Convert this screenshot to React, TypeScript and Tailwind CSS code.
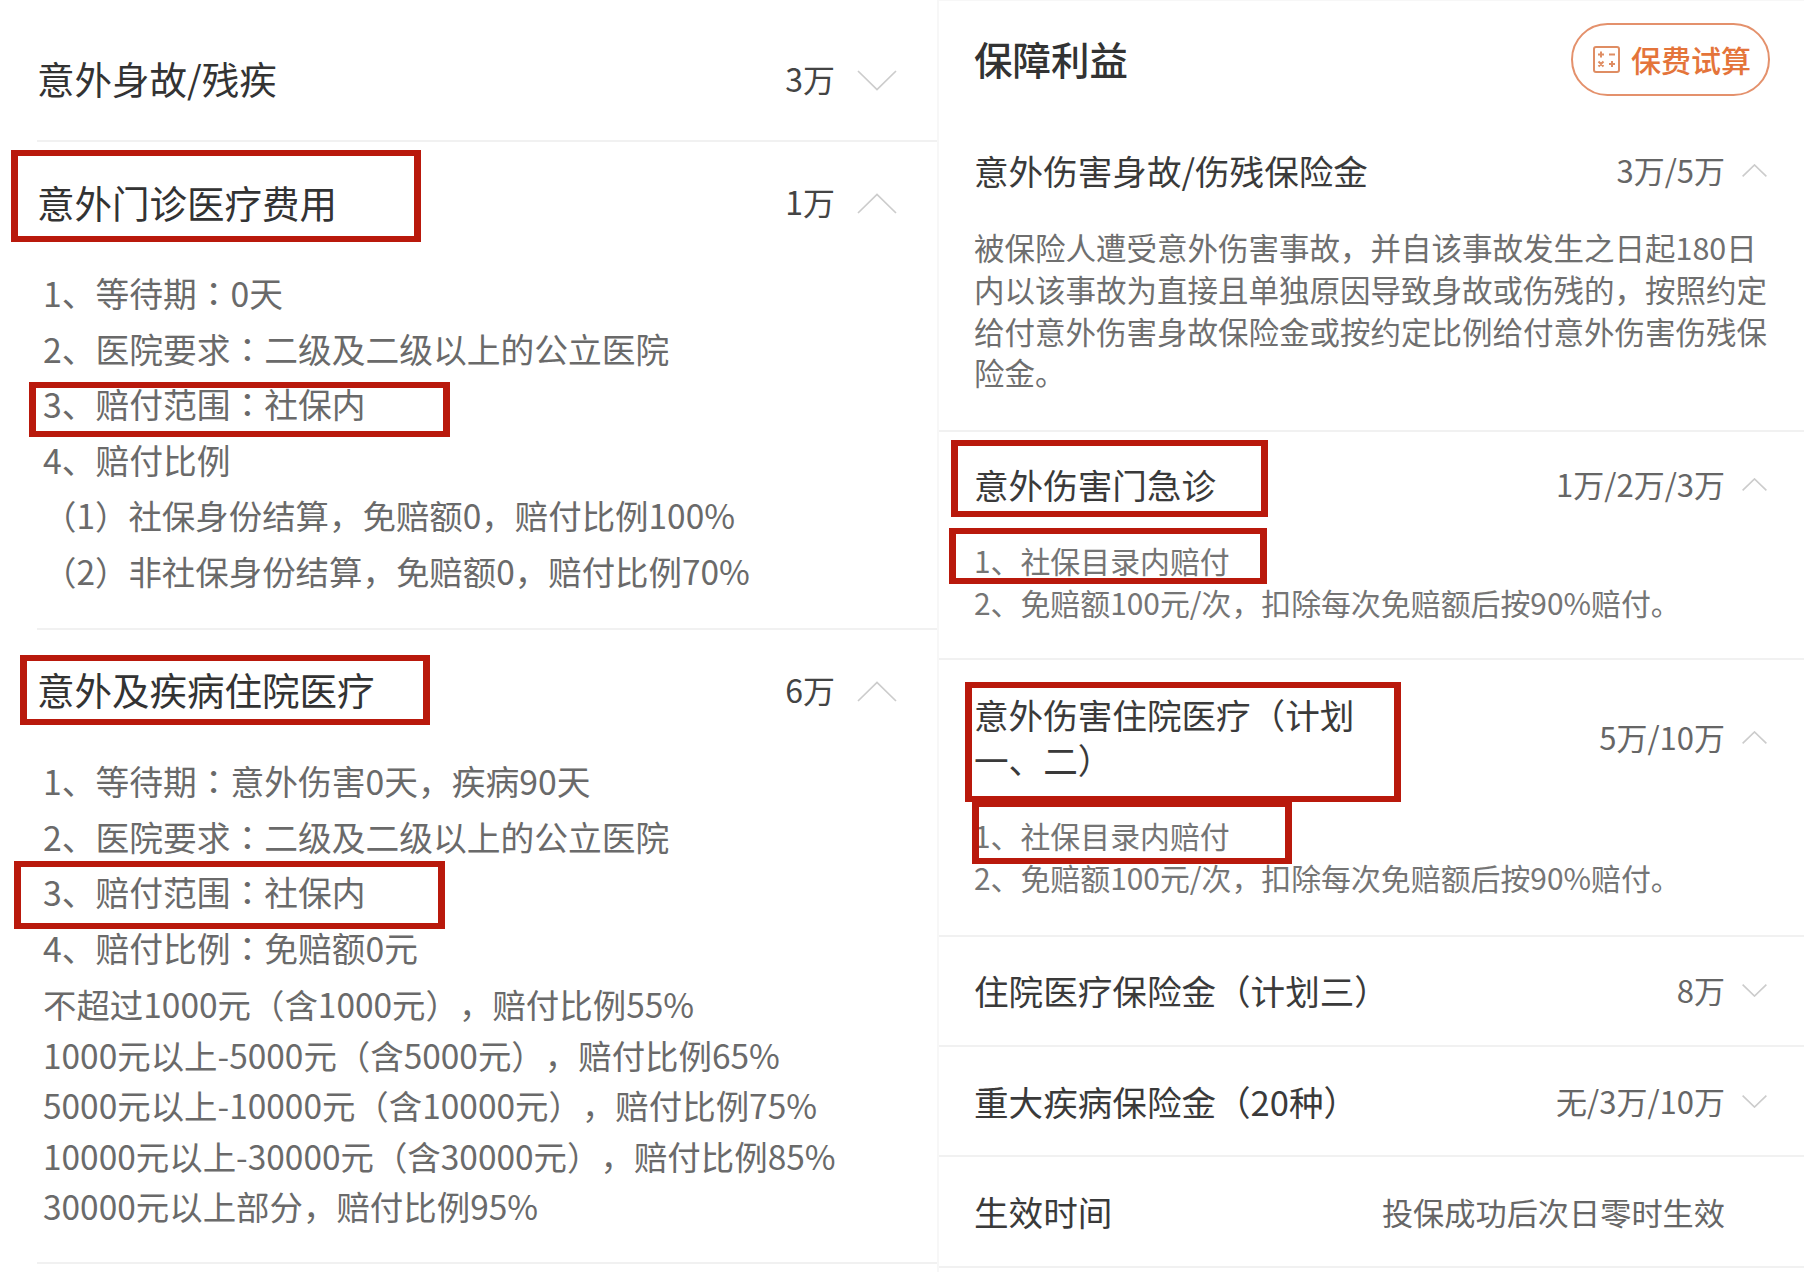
const ui = '"Noto Sans CJK SC", "Noto Sans", sans-serif';

function Chevron({ up, large }: { up?: boolean; large?: boolean }) {
  return (
    <svg
      viewBox="0 0 40 21"
      preserveAspectRatio="none"
      fill="none"
      stroke="#cccccc"
      strokeWidth={large ? 1.7 : 2.6}
      className={large ? "h-[21px] w-[40px] shrink-0" : "h-[13px] w-[25px] shrink-0"}
    >
      <path d={up ? "M1 20 L20 1.5 L39 20" : "M1 1 L20 19.5 L39 1"} />
    </svg>
  );
}

function Colon() {
  return <span style={{ fontFamily: '"Noto Sans CJK JP", sans-serif' }}>：</span>;
}

function LeftHeader({ title, value, up, cls }: { title: string; value: string; up?: boolean; cls: string }) {
  return (
    <div className={`flex items-center pr-[40px] ${cls}`}>
      <div className="mb-[3px] flex-1 text-[37.5px] text-[#333333]">{title}</div>
      <div className="mb-[5px] mr-[22px] text-[32px] text-[#444444]">{value}</div>
      <Chevron up={up} large />
    </div>
  );
}

function RightHeader({
  title,
  value,
  up,
  cls,
  titleCls = "",
}: {
  title: React.ReactNode;
  value: string;
  up?: boolean;
  cls: string;
  titleCls?: string;
}) {
  return (
    <div className={`flex items-center pl-[35px] pr-[37px] ${cls}`}>
      <div className={`flex-none text-[34.6px] leading-[45px] text-[#3a3a3a] ${titleCls}`}>{title}</div>
      <div className="ml-auto mr-[17px] text-[31px] text-[#666666]">{value}</div>
      <Chevron up={up} />
    </div>
  );
}

function Line({ children, cls = "" }: { children: React.ReactNode; cls?: string }) {
  return <div className={`whitespace-nowrap ${cls}`}>{children}</div>;
}

function RedBox({ cls }: { cls: string }) {
  return <div className={`pointer-events-none absolute border-x-[7px] border-y-[6px] border-[#b9190c] ${cls}`} />;
}

function CalcIcon() {
  return (
    <svg viewBox="0 0 27 27" fill="none" stroke="#df8d63" strokeWidth="2" className="h-[27px] w-[27px] shrink-0">
      <rect x="1" y="1" width="25" height="25" rx="2" />
      <path d="M5 8.5 H11 M8 5.5 V11.5 M16 8.5 H22 M5.5 15.5 L10.5 20.5 M10.5 15.5 L5.5 20.5 M16 18 H22 M19 15 V21" />
    </svg>
  );
}

export default function App() {
  return (
    <div
      className="relative grid h-[1272px] w-[1804px] grid-cols-[937px_867px] overflow-hidden bg-white [text-spacing-trim:space-all]"
      style={{ fontFamily: ui }}
    >
      <div className="flex flex-col pl-[37px]">
        <section className="border-b-2 border-[#f1f1f1]">
          <LeftHeader title="意外身故/残疾" value="3万" cls="h-[140px] pt-[20px]" />
        </section>
        <section className="border-b-2 border-[#f1f1f1] pb-[30px]">
          <LeftHeader title="意外门诊医疗费用" value="1万" up cls="h-[123px]" />
          <div className="pl-[6px] text-[33.75px] leading-[55.5px] text-[#6a6a6a]">
            <Line>1、等待期<Colon />0天</Line>
            <Line>2、医院要求<Colon />二级及二级以上的公立医院</Line>
            <Line>3、赔付范围<Colon />社保内</Line>
            <Line>4、赔付比例</Line>
            <Line cls="text-[33.45px]">（1）社保身份结算，免赔额0，赔付比例100%</Line>
            <Line cls="text-[33.45px]">（2）非社保身份结算，免赔额0，赔付比例70%</Line>
          </div>
        </section>
        <section className="border-b-2 border-[#f1f1f1] pb-[30px]">
          <LeftHeader title="意外及疾病住院医疗" value="6万" up cls="h-[123px] pb-[1px]" />
          <div className="pl-[6px] text-[33.75px] leading-[55.5px] text-[#6a6a6a]">
            <Line>1、等待期<Colon />意外伤害0天，疾病90天</Line>
            <Line>2、医院要求<Colon />二级及二级以上的公立医院</Line>
            <Line>3、赔付范围<Colon />社保内</Line>
            <Line>4、赔付比例<Colon />免赔额0元</Line>
          </div>
          <div className="mt-[4px] pl-[6px] text-[33.45px] leading-[50.6px] text-[#6a6a6a]">
            <Line>不超过1000元（含1000元），赔付比例55%</Line>
            <Line>1000元以上-5000元（含5000元），赔付比例65%</Line>
            <Line>5000元以上-10000元（含10000元），赔付比例75%</Line>
            <Line>10000元以上-30000元（含30000元），赔付比例85%</Line>
            <Line>30000元以上部分，赔付比例95%</Line>
          </div>
        </section>
      </div>

      <div className="flex flex-col border-l-2 border-t border-[#f7f7f7]">
        <div className="flex h-[115px] items-center justify-between pl-[35px] pr-[34px] pt-[1px]">
          <div className="mb-[1px] text-[38.5px] font-medium text-[#333333]">保障利益</div>
          <div className="flex h-[73px] w-[199px] items-center gap-[11px] rounded-full border-2 border-[#e4916c] pl-[20px]">
            <CalcIcon />
            <span className="text-[30px] font-medium text-[#e4743a]">保费试算</span>
          </div>
        </div>
        <section className="border-b-2 border-[#f1f1f1] pb-[36px]">
          <RightHeader title="意外伤害身故/伤残保险金" value="3万/5万" up cls="h-[111px] pb-[2px]" />
          <div className="pl-[35px] pr-[30px] text-[30.5px] leading-[41.8px] text-[#6f6f6f]">
            被保险人遭受意外伤害事故，并自该事故发生之日起180日内以该事故为直接且单独原因导致身故或伤残的，按照约定给付意外伤害身故保险金或按约定比例给付意外伤害伤残保险金。
          </div>
        </section>
        <section className="border-b-2 border-[#f1f1f1] pb-[35px]">
          <RightHeader title="意外伤害门急诊" value="1万/2万/3万" up cls="h-[107px] pb-[3px]" />
          <div className="pl-[35px] text-[29.9px] leading-[42px] text-[#757575]">
            <Line>1、社保目录内赔付</Line>
            <Line>2、免赔额100元/次，扣除每次免赔额后按90%赔付。</Line>
          </div>
        </section>
        <section className="border-b-2 border-[#f1f1f1] pb-[37px]">
          <RightHeader title="意外伤害住院医疗（计划一、二）" titleCls="max-w-[400px]" value="5万/10万" up cls="h-[155px] pb-[1px]" />
          <div className="pl-[35px] text-[29.9px] leading-[41.5px] text-[#757575]">
            <Line>1、社保目录内赔付</Line>
            <Line>2、免赔额100元/次，扣除每次免赔额后按90%赔付。</Line>
          </div>
        </section>
        <section className="border-b-2 border-[#f1f1f1]">
          <RightHeader title="住院医疗保险金（计划三）" value="8万" cls="h-[108px] pb-[2px]" />
        </section>
        <section className="border-b-2 border-[#f1f1f1]">
          <RightHeader title="重大疾病保险金（20种）" value="无/3万/10万" cls="h-[108px]" />
        </section>
        <section className="border-b-2 border-[#f1f1f1]">
          <div className="flex h-[109px] items-center pl-[35px] pr-[79px] pt-[1px]">
            <div className="text-[34.6px] text-[#3a3a3a]">生效时间</div>
            <div className="ml-auto text-[31.2px] text-[#666666]">投保成功后次日零时生效</div>
          </div>
        </section>
      </div>

      <RedBox cls="left-[11px] top-[150px] h-[92px] w-[410px]" />
      <RedBox cls="left-[29px] top-[382px] h-[55px] w-[421px]" />
      <RedBox cls="left-[20px] top-[655px] h-[70px] w-[410px]" />
      <RedBox cls="left-[14px] top-[861px] h-[68px] w-[431px]" />
      <RedBox cls="left-[951px] top-[440px] h-[77px] w-[317px]" />
      <RedBox cls="left-[949px] top-[528px] h-[56px] w-[318px]" />
      <RedBox cls="left-[965px] top-[682px] h-[120px] w-[436px]" />
      <RedBox cls="left-[972px] top-[801px] h-[63px] w-[320px]" />
    </div>
  );
}
